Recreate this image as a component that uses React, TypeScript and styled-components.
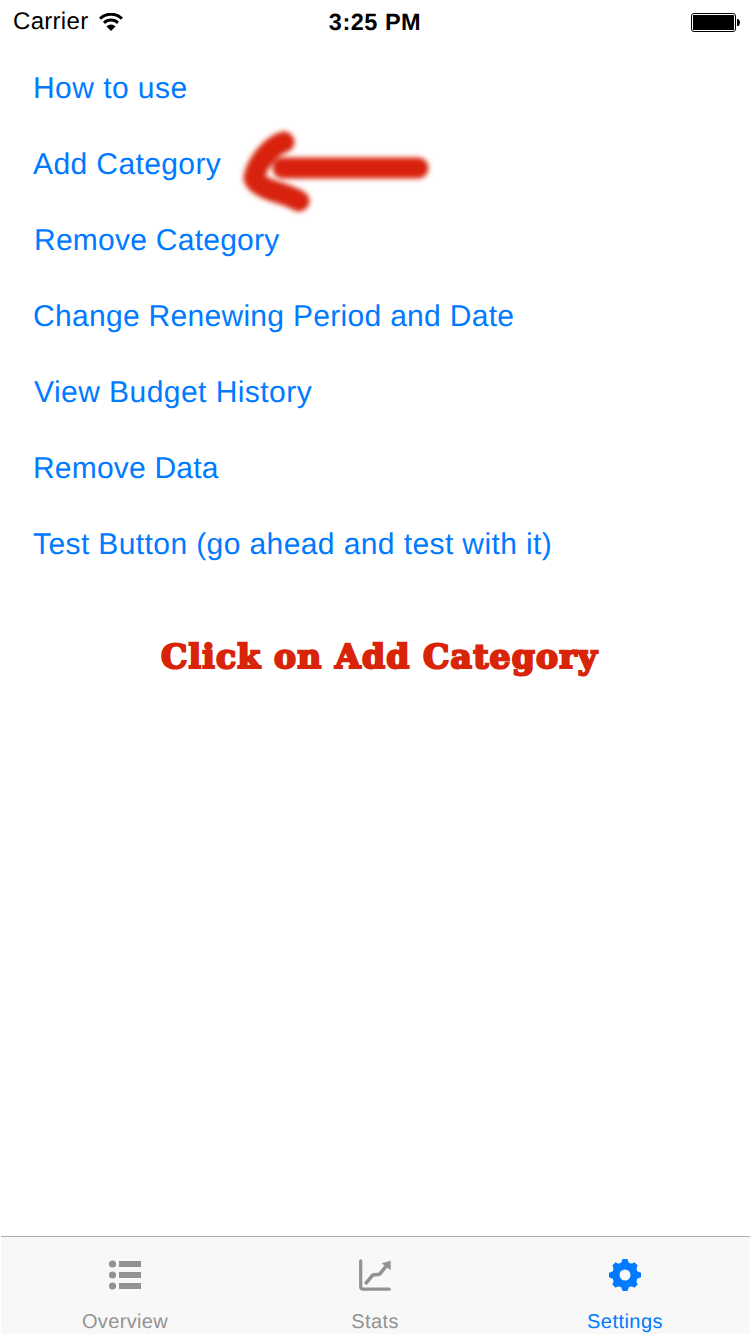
import React from "react";
import styled, { createGlobalStyle } from "styled-components";

const GlobalStyle = createGlobalStyle`
  * { box-sizing: border-box; }
  body {
    margin: 0;
    background: #fff;
    font-family: "Liberation Sans", Arial, sans-serif;
    text-rendering: geometricPrecision;
  }
`;

const Screen = styled.div`
  position: relative;
  display: flex;
  flex-direction: column;
  width: 750px;
  height: 1334px;
  overflow: hidden;
  background: #fff;
`;

const StatusBar = styled.header`
  display: grid;
  grid-template-columns: 1fr auto 1fr;
  align-items: center;
  height: 42px;
  padding: 2px 10px 0 13px;
  font-size: 24px;
  line-height: 40px;
  color: #000;
`;

const Carrier = styled.div`
  display: flex;
  align-items: center;
  gap: 11px;
  letter-spacing: 0.3px;
`;

const Clock = styled.div`
  font-weight: 700;
  font-size: 23.5px;
  letter-spacing: 0.5px;
  margin-right: 3px;
`;

const BatteryIcon = styled.svg`
  justify-self: end;
`;

const Menu = styled.nav`
  display: flex;
  flex-direction: column;
  align-items: flex-start;
  padding: 9px 0 0 33px;
`;

const MenuLink = styled.a<{ $tracking: number; $indent?: number }>`
  height: 76px;
  margin-left: ${(p) => p.$indent ?? 0}px;
  line-height: 76px;
  font-size: 30px;
  letter-spacing: ${(p) => p.$tracking}px;
  white-space: nowrap;
  color: #007aff;
`;

const PointerArrow = styled.svg`
  position: absolute;
  left: 220px;
  top: 110px;
`;

const Hint = styled.h1`
  margin: 46px 0 0 161px;
  font-family: "DejaVu Serif", serif;
  font-weight: 700;
  font-size: 33px;
  line-height: 56px;
  letter-spacing: 1.2px;
  white-space: nowrap;
  color: #d82408;
  -webkit-text-stroke: 2.2px #d82408;
  stroke-linejoin: round;
`;

const TabBar = styled.footer`
  display: grid;
  grid-template-columns: repeat(3, 250px);
  height: 98px;
  margin: auto 0 0 1px;
  border-top: 1px solid #acacac;
  background: #f8f8f8;
`;

const Tab = styled.div<{ $active?: boolean }>`
  display: flex;
  flex-direction: column;
  align-items: center;
  gap: 17px;
  margin: 0 1px 0 -1px;
  padding-top: 20px;
  color: ${(p) => (p.$active ? "#007aff" : "#929292")};
`;

const TabLabel = styled.span<{ $tracking: number }>`
  font-size: 20px;
  line-height: 24px;
  letter-spacing: ${(p) => p.$tracking}px;
`;

const links = [
  { text: "How to use", tracking: 0.45, indent: 0 },
  { text: "Add Category", tracking: 0.4, indent: 0 },
  { text: "Remove Category", tracking: 0.25, indent: 1 },
  { text: "Change Renewing Period and Date", tracking: 0.3, indent: 0 },
  { text: "View Budget History", tracking: 0.45, indent: 1 },
  { text: "Remove Data", tracking: 0.2, indent: 0 },
  { text: "Test Button (go ahead and test with it)", tracking: 0.4, indent: 0 },
];

const WifiIcon = () => (
  <svg width="24" height="18" viewBox="0 0 24 18" fill="none" stroke="#000" strokeWidth="3">
    <path d="M1 5.6a16 16 0 0 1 22 0" />
    <path d="M5 9.9a10.2 10.2 0 0 1 14 0" />
    <path d="M7.5 13.4a6.2 6.2 0 0 1 9 0L12 17.9z" fill="#000" stroke="none" />
  </svg>
);

const ListIcon = () => (
  <svg width="32" height="36" viewBox="0 0 32 36" fill="currentColor">
    {[7, 18, 29].map((y) => (
      <g key={y}>
        <circle cx="3.5" cy={y} r="3.6" />
        <rect x="10" y={y - 3} width="22" height="6" />
      </g>
    ))}
  </svg>
);

const ChartIcon = () => (
  <svg width="32" height="36" viewBox="0 0 32 36" fill="none" stroke="currentColor" strokeLinecap="round">
    <path d="M1.7 3.8V29.5Q1.7 32.2 4.4 32.2H30.3" strokeWidth="3.2" />
    <path d="M7.3 25.8L13 18.8Q13.8 17.9 15 17.8L19.2 17.5Q20.5 17.4 21.3 16.4L27 9.4" strokeWidth="3.6" />
    <path d="M22.6 6.2L31.7 3.8V13.2z" fill="currentColor" stroke="none" />
  </svg>
);

const GearIcon = () => (
  <svg width="32" height="36" viewBox="-16 -18 32 36" fill="currentColor">
    <path
      fillRule="evenodd"
      d="M-2.4-16H2.4L3.8-12.2Q5.8-11.3 7.7-11.8L9.4-12.7L12.7-9.4L11.8-7.7Q11.3-5.8 12.2-3.8L16-2.2V2.2L12.2 3.8Q11.3 5.8 11.8 7.7L12.7 9.4L9.4 12.7L7.7 11.8Q5.8 11.3 3.8 12.2L2.4 16H-2.4L-3.8 12.2Q-5.8 11.3-7.7 11.8L-9.4 12.7L-12.7 9.4L-11.8 7.7Q-11.3 5.8-12.2 3.8L-16 2.2V-2.2L-12.2-3.8Q-11.3-5.8-11.8-7.7L-12.7-9.4L-9.4-12.7L-7.7-11.8Q-5.8-11.3-3.8-12.2ZM0-5.5A5.5 5.5 0 1 0 0 5.5A5.5 5.5 0 1 0 0-5.5Z"
    />
  </svg>
);

export default function App() {
  return (
    <Screen>
      <GlobalStyle />
      <StatusBar>
        <Carrier>
          Carrier
          <WifiIcon />
        </Carrier>
        <Clock>3:25 PM</Clock>
        <BatteryIcon width="49" height="19" viewBox="0 0 49 19">
          <rect x="0.5" y="0.5" width="44" height="18" rx="2.5" fill="#fff" stroke="#000" />
          <rect x="2" y="2" width="41" height="15" rx="0.5" />
          <path d="M46 6h1.2q1.8 1 1.8 3.5t-1.8 3.5H46z" />
        </BatteryIcon>
      </StatusBar>
      <Menu>
        {links.map((l) => (
          <MenuLink key={l.text} $tracking={l.tracking} $indent={l.indent}>
            {l.text}
          </MenuLink>
        ))}
      </Menu>
      <PointerArrow width="240" height="120" viewBox="0 0 240 120" fill="none">
        <defs>
          <filter id="brush" x="0" y="0" width="240" height="120" filterUnits="userSpaceOnUse">
            <feGaussianBlur stdDeviation="2.7" />
          </filter>
        </defs>
        <g stroke="#d82408" strokeWidth="21" strokeLinecap="round" strokeLinejoin="round" filter="url(#brush)">
          <path d="M64 32C51 36 37 52 34 68Q36 75 53 81Q68 85 79 91" />
          <path d="M63 58H198" />
        </g>
      </PointerArrow>
      <Hint>Click on Add Category</Hint>
      <TabBar>
        <Tab>
          <ListIcon />
          <TabLabel $tracking={0.35}>Overview</TabLabel>
        </Tab>
        <Tab>
          <ChartIcon />
          <TabLabel $tracking={0.4}>Stats</TabLabel>
        </Tab>
        <Tab $active>
          <GearIcon />
          <TabLabel $tracking={0.45}>Settings</TabLabel>
        </Tab>
      </TabBar>
    </Screen>
  );
}
